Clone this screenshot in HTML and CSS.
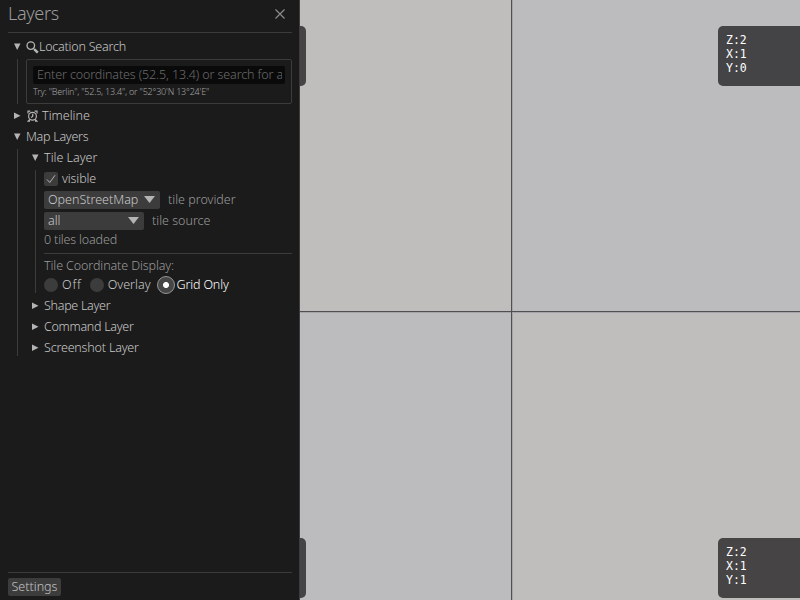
FILE: index.html
```html
<!DOCTYPE html>
<html lang="en">
<head>
<meta charset="utf-8">
<title>Layers</title>
<link rel="stylesheet" href="styles.css">
</head>
<body>
<main class="map">
  <div class="tile warm"><div class="badge">Z:2<br>X:0<br>Y:0</div></div>
  <div class="tile cool"><div class="badge">Z:2<br>X:1<br>Y:0</div></div>
  <div class="tile cool"><div class="badge">Z:2<br>X:0<br>Y:1</div></div>
  <div class="tile warm"><div class="badge">Z:2<br>X:1<br>Y:1</div></div>
</main>
<aside class="panel">
  <header class="title">
    <h1>Layers</h1>
    <svg class="close" viewBox="0 0 10 10"><path d="M0.5 0.5L9.5 9.5M9.5 0.5L0.5 9.5"/></svg>
  </header>
  <section>
    <div class="row fold"><i class="tri down"></i><svg class="glass" viewBox="0 0 13 13"><circle cx="4.8" cy="4.6" r="3.8"/><path d="M7.4 7.4L9 9"/><path class="grip" d="M8.4 8.4L11.8 11.6"/></svg><span class="t-loc">Location Search</span></div>
    <div class="nest search-nest">
      <div class="frame">
        <div class="input">Enter coordinates (52.5, 13.4) or search for a</div>
        <div class="hint">Try: "Berlin", "52.5, 13.4", or "52°30'N 13°24'E"</div>
      </div>
    </div>
    <div class="row fold timeline"><i class="tri right"></i><svg class="clock" viewBox="0 0 11 12"><circle cx="5.5" cy="6.3" r="3.9"/><path d="M5.7 3.8V6.5L4 7.6M1 3.4V1.2H3.4M7.6 1.2H10V3.4M2.8 9.5L1.2 11.2H3M8.2 9.5L9.8 11.2H8"/></svg><span class="t-time">Timeline</span></div>
    <div class="row fold"><i class="tri down"></i><span class="t-map">Map Layers</span></div>
    <div class="nest layers">
      <div class="row fold first"><i class="tri down"></i><span class="t-tile">Tile Layer</span></div>
      <div class="nest inner">
        <div class="row first"><span class="check"><svg viewBox="0 0 14 14"><path d="M3 7.5L5.7 10.5L11 3.3"/></svg></span><span class="t-vis">visible</span></div>
        <div class="row"><span class="combo wide"><span class="t-osm">OpenStreetMap</span><i class="arrow"></i></span><span class="dim t-prov">tile provider</span></div>
        <div class="row"><span class="combo"><span>all</span><i class="arrow"></i></span><span class="dim t-src">tile source</span></div>
        <div class="row count dim"><span class="t-count">0 tiles loaded</span></div>
        <hr>
        <div class="row caption dim"><span class="t-disp">Tile Coordinate Display:</span></div>
        <div class="row radios">
          <span class="radio"></span><span class="t-off">Off</span>
          <span class="radio"></span><span class="t-over">Overlay</span>
          <span class="radio on"></span><span class="t-grid">Grid Only</span>
        </div>
      </div>
      <div class="row fold"><i class="tri right"></i><span class="t-shape">Shape Layer</span></div>
      <div class="row fold"><i class="tri right"></i><span class="t-cmd">Command Layer</span></div>
      <div class="row fold"><i class="tri right"></i><span class="t-shot">Screenshot Layer</span></div>
    </div>
  </section>
  <footer><button>Settings</button></footer>
</aside>
</body>
</html>
```

FILE: styles.css
```css
* { box-sizing: border-box; }
html { height: 600px; overflow: hidden; }
body {
  margin: 0;
  width: 800px;
  height: 600px;
  overflow: hidden;
  display: grid;
  grid-template: 600px / 800px;
  background: #1b1b1b;
  color: #c8c8c8;
  font: 300 12.5px/16px "Noto Sans", sans-serif;
  white-space: nowrap;
}
.map, .panel { grid-area: 1 / 1; }

.map {
  display: grid;
  grid-template: 312px 288px / 512px 288px;
  overflow: hidden;
}
.tile {
  display: flex;
  overflow: hidden;
  padding-left: 206px;
  border: 0 solid #505052;
  box-shadow: inset 1px 1px #a5a5a9;
}
.tile:nth-child(odd) { border-right-width: 1px; }
.tile:nth-child(-n+2) { border-bottom-width: 1px; padding-top: 26px; box-shadow: inset 1px 0 #a5a5a9; }
.tile:nth-child(n+3) { padding-top: 226px; }
.warm { background: #bfbebc; }
.cool { background: #bcbcbf; }
.badge {
  width: 100px;
  height: 60px;
  flex: none;
  padding: 7px 8px;
  border-radius: 5px;
  background: #444446;
  color: #fff;
  font: 400 11.5px/14px "DejaVu Sans Mono", monospace;
}
.warm .badge { background: #464445; }

.panel {
  width: 300px;
  height: 600px;
  z-index: 1;
  padding: 0 7px 0 8px;
  display: flex;
  flex-direction: column;
  background: #1b1b1b;
  border-right: 1px solid #3c3c3c;
}
.title {
  height: 33px;
  padding: 0 7px 6px 0;
  display: flex;
  align-items: center;
  justify-content: space-between;
  border-bottom: 1px solid #3c3c3c;
}
h1 { margin: 0; font-size: 18px; font-weight: 300; line-height: 24px; letter-spacing: -.35px; color: #9c9c9c; }
.close { width: 10px; height: 10px; margin-top: 2px; stroke: #8c8c8c; stroke-width: 1.2; fill: none; }

section { flex: 1; padding-top: 3px; }
.row { height: 21px; flex: none; display: flex; align-items: center; }
.tri { width: 18px; height: 8px; flex: none; background: #b4b4b4; }
.down { clip-path: polygon(6px 1px, 12.5px 1px, 9.2px 7.5px); }
.right { clip-path: polygon(6px 1px, 12.5px 4.2px, 6px 7.5px); }
.glass { width: 13px; height: 13px; margin-top: 1px; fill: none; stroke: #b4b4b4; stroke-width: 1.3; }
.glass .grip { stroke-width: 2.6; }
.clock { width: 11px; height: 12px; margin: 0 4px 0 1px; fill: none; stroke: #b4b4b4; stroke-width: 1.2; }

.nest {
  display: flex;
  flex-direction: column;
  margin: 2px 0 0 9px;
  padding-left: 8px;
  border-left: 1px solid #3c3c3c;
}
.first { margin-top: -2px; }
.search-nest { height: 45px; }
.timeline { margin-top: 1px; }
.layers { height: 207px; }
.inner { height: 123px; margin-bottom: 2px; flex: none; }
.frame {
  height: 45px;
  width: 266px;
  padding: 6px;
  border: 1px solid #3c3c3c;
  border-radius: 2px;
}
.input {
  width: 252px;
  height: 18px;
  border: 0 solid #0a0a0a;
  border-width: 0 3px 0 4px;
  border-radius: 2px;
  overflow: hidden;
  background: #0a0a0a;
  color: #6a6a6a;
  line-height: 18px;
  letter-spacing: -.12px;
}
.hint { font-size: 9px; line-height: 12px; padding-top: 2px; color: #a4a4a4; letter-spacing: -.2px; }

.dim { color: #9a9a9a; }
.check { width: 14px; height: 14px; margin-right: 4px; border-radius: 2px; background: #3c3c3c; }
.check svg { display: block; fill: none; stroke: #b4b4b4; }
.combo {
  width: 100px;
  height: 18px;
  padding: 0 5px 0 4px;
  margin-right: 8px;
  display: flex;
  align-items: center;
  justify-content: space-between;
  border-radius: 2px;
  background: #3c3c3c;
}
.wide { width: 116px; }
.arrow { width: 11px; height: 7px; background: #b4b4b4; clip-path: polygon(0 0, 100% 0, 50% 100%); }
.count { height: 17px; }
hr { height: 1px; width: 100%; flex: none; margin: 5px 0 4px; border: 0; background: #3c3c3c; }
.caption { height: 16px; }
.radios { height: 22px; padding-bottom: 1px; }
.radio { width: 14px; height: 14px; flex: none; margin-right: 4px; border-radius: 50%; background: #3c3c3c; }
.t-off, .t-over { margin-right: 8px; }
.on {
  width: 18px;
  height: 18px;
  margin: 0 2px 0 -2px;
  border: 1px solid #969696;
  background: radial-gradient(circle, #fff 2.6px, #464646 3.4px);
}

.t-loc { letter-spacing: -.22px; }
.t-map { letter-spacing: -.28px; }
.t-vis { letter-spacing: -.1px; }
.t-count { letter-spacing: -.17px; }
.t-disp { letter-spacing: -.1px; }
.t-off { letter-spacing: .8px; }
.t-grid { letter-spacing: -.15px; color: #fff; }
.t-shape, .t-cmd { letter-spacing: -.28px; }
.t-shot { letter-spacing: -.18px; }

footer { height: 28px; padding-top: 5px; border-top: 1px solid #3c3c3c; }
button {
  width: 53px;
  height: 18px;
  display: block;
  padding: 0;
  border: 0;
  border-radius: 2px;
  background: #3c3c3c;
  color: #c4c4c4;
  font: inherit;
  line-height: 18px;
}
```
